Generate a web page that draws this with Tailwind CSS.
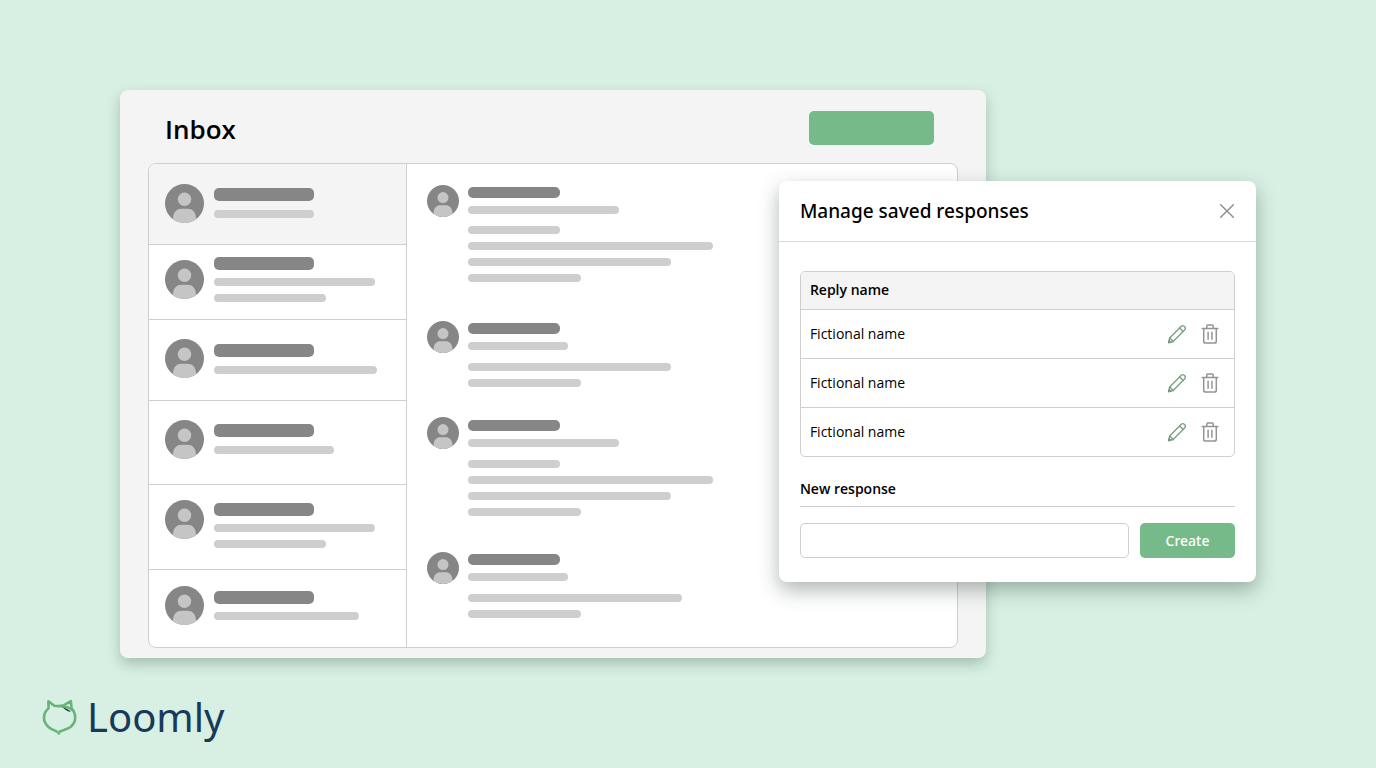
<!DOCTYPE html>
<html lang="en">
<head>
<meta charset="utf-8">
<meta name="viewport" content="width=device-width, initial-scale=1">
<title>Loomly – Manage saved responses</title>
<script src="https://cdn.jsdelivr.net/npm/@tailwindcss/browser@4"></script>
</head>
<body class="min-h-screen bg-[#d8f0e3] font-['Open_Sans','Noto_Sans',sans-serif] text-black">
<svg class="absolute size-0" aria-hidden="true">
  <symbol id="avatar" viewBox="0 0 39 39">
    <circle cx="19.5" cy="19.5" r="19.5" fill="#868686"/>
    <g fill="#c5c5c5">
      <circle cx="19.5" cy="15.3" r="6.7"/>
      <path d="M8 35.250V34.500C8 28 12 24.800 16.500 24.800H22.500C27 24.800 31 28 31 34.500V35.250A19.500 19.500 0 0 1 8 35.250Z"/>
    </g>
  </symbol>
  <symbol id="pencil" viewBox="0 0 20 20">
    <g fill="none" stroke="#7da187" stroke-width="1.400" stroke-linejoin="round" stroke-linecap="round">
      <path d="M1.500 18.700L2.700 14L14 2.500C15.100 1.400 16.400 1.400 17.500 2.500C18.600 3.600 18.600 4.900 17.500 6L6.200 17.500Z"/>
      <path d="M2.700 14L6.200 17.500M12.600 3.900L16.100 7.400"/>
    </g>
    <path d="M1.200 19L2 15.800L4.300 18.100Z" fill="#6f8f78"/>
  </symbol>
  <symbol id="trash" viewBox="0 0 18 20">
    <g fill="none" stroke="#949494" stroke-width="1.500" stroke-linejoin="round" stroke-linecap="round">
      <path d="M1.200 4.500H16.800M5.800 4.300V2C5.800 1.300 6.100 1 6.800 1H11.200C11.900 1 12.200 1.300 12.200 2V4.300"/>
      <path d="M2.700 4.700V17.200C2.700 18.500 3.300 19.100 4.600 19.100H13.400C14.700 19.100 15.300 18.500 15.300 17.200V4.700"/>
      <path d="M7.100 8.200V15.300M10.900 8.200V15.300"/>
    </g>
  </symbol>
</svg>

<main class="px-[120px] pt-[90px]">
  <div class="relative">
    <section aria-labelledby="inbox-title" class="mr-[270px] rounded-lg bg-[#f4f4f4] px-7 pb-2.5 shadow-[0_6px_14px_rgba(40,80,60,0.30)]">
      <header class="flex h-[73px] items-center justify-between pt-[3px] pr-6 pl-[17px]">
        <h1 id="inbox-title" class="pt-0.5 text-[26px] leading-8 font-semibold">Inbox</h1>
        <button type="button" aria-label="New message" class="h-[34px] w-[125px] rounded-[5px] bg-[#77ba89]"></button>
      </header>

      <div class="flex overflow-hidden rounded-lg border border-[#cfcfcf] bg-white">
        <ul class="w-[258px] shrink-0 border-r border-[#cfcfcf]">
          <li class="flex h-[81px] gap-2.5 border-b border-[#cfcfcf] bg-[#f4f4f4] px-4 pt-5">
            <svg class="size-[39px] shrink-0"><use href="#avatar"/></svg>
            <div class="flex flex-col gap-[9px] pt-1">
              <div class="h-[13px] w-[100px] rounded-[5px] bg-[#868686]"></div>
              <div class="h-2 w-[100px] rounded-full bg-[#cecece]"></div>
            </div>
          </li>
          <li class="flex h-[75px] gap-2.5 border-b border-[#cfcfcf] px-4 pt-3">
            <svg class="mt-[3px] size-[39px] shrink-0"><use href="#avatar"/></svg>
            <div class="flex flex-col gap-2">
              <div class="h-[13px] w-[100px] rounded-[5px] bg-[#868686]"></div>
              <div class="h-2 w-[161px] rounded-full bg-[#cecece]"></div>
              <div class="h-2 w-[112px] rounded-full bg-[#cecece]"></div>
            </div>
          </li>
          <li class="flex h-[81px] gap-2.5 border-b border-[#cfcfcf] px-4 pt-[19px]">
            <svg class="size-[39px] shrink-0"><use href="#avatar"/></svg>
            <div class="flex flex-col gap-[9px] pt-[5px]">
              <div class="h-[13px] w-[100px] rounded-[5px] bg-[#868686]"></div>
              <div class="h-2 w-[163px] rounded-full bg-[#cecece]"></div>
            </div>
          </li>
          <li class="flex h-[84px] gap-2.5 border-b border-[#cfcfcf] px-4 pt-[19px]">
            <svg class="size-[39px] shrink-0"><use href="#avatar"/></svg>
            <div class="flex flex-col gap-[9px] pt-1">
              <div class="h-[13px] w-[100px] rounded-[5px] bg-[#868686]"></div>
              <div class="h-2 w-[120px] rounded-full bg-[#cecece]"></div>
            </div>
          </li>
          <li class="flex h-[85px] gap-2.5 border-b border-[#cfcfcf] px-4 pt-[15px]">
            <svg class="size-[39px] shrink-0"><use href="#avatar"/></svg>
            <div class="flex flex-col gap-2 pt-[3px]">
              <div class="h-[13px] w-[100px] rounded-[5px] bg-[#868686]"></div>
              <div class="h-2 w-[161px] rounded-full bg-[#cecece]"></div>
              <div class="h-2 w-[112px] rounded-full bg-[#cecece]"></div>
            </div>
          </li>
          <li class="flex h-[77px] gap-2.5 px-4 pt-4">
            <svg class="size-[39px] shrink-0"><use href="#avatar"/></svg>
            <div class="flex flex-col gap-2 pt-[5px]">
              <div class="h-[13px] w-[100px] rounded-[5px] bg-[#868686]"></div>
              <div class="h-2 w-[145px] rounded-full bg-[#cecece]"></div>
            </div>
          </li>
        </ul>

        <div class="flex-1 px-5 pt-[21px]">
          <article class="flex h-[136px] gap-2">
            <svg class="size-8 shrink-0"><use href="#avatar"/></svg>
            <div class="flex flex-col gap-2 pt-[2px] pl-px">
              <div class="h-[11px] w-[92px] rounded-[5px] bg-[#868686]"></div>
              <div class="mb-1 h-2 w-[151px] rounded-full bg-[#cecece]"></div>
              <div class="h-2 w-[92px] rounded-full bg-[#cecece]"></div>
              <div class="h-2 w-[245px] rounded-full bg-[#cecece]"></div>
              <div class="h-2 w-[203px] rounded-full bg-[#cecece]"></div>
              <div class="h-2 w-[113px] rounded-full bg-[#cecece]"></div>
            </div>
          </article>
          <article class="flex h-24 gap-2">
            <svg class="size-8 shrink-0"><use href="#avatar"/></svg>
            <div class="flex flex-col gap-2 pt-[2px] pl-px">
              <div class="h-[11px] w-[92px] rounded-[5px] bg-[#868686]"></div>
              <div class="mb-[5px] h-2 w-[100px] rounded-full bg-[#cecece]"></div>
              <div class="h-2 w-[203px] rounded-full bg-[#cecece]"></div>
              <div class="h-2 w-[113px] rounded-full bg-[#cecece]"></div>
            </div>
          </article>
          <article class="flex h-[135px] gap-2">
            <svg class="size-8 shrink-0"><use href="#avatar"/></svg>
            <div class="flex flex-col gap-2 pt-[3px] pl-px">
              <div class="h-[11px] w-[92px] rounded-[5px] bg-[#868686]"></div>
              <div class="mb-[5px] h-2 w-[151px] rounded-full bg-[#cecece]"></div>
              <div class="h-2 w-[92px] rounded-full bg-[#cecece]"></div>
              <div class="h-2 w-[245px] rounded-full bg-[#cecece]"></div>
              <div class="h-2 w-[203px] rounded-full bg-[#cecece]"></div>
              <div class="h-2 w-[113px] rounded-full bg-[#cecece]"></div>
            </div>
          </article>
          <article class="flex gap-2">
            <svg class="size-8 shrink-0"><use href="#avatar"/></svg>
            <div class="flex flex-col gap-2 pt-[2px] pl-px">
              <div class="h-[11px] w-[92px] rounded-[5px] bg-[#868686]"></div>
              <div class="mb-[5px] h-2 w-[100px] rounded-full bg-[#cecece]"></div>
              <div class="h-2 w-[214px] rounded-full bg-[#cecece]"></div>
              <div class="h-2 w-[113px] rounded-full bg-[#cecece]"></div>
            </div>
          </article>
        </div>
      </div>
    </section>

    <section role="dialog" aria-labelledby="dialog-title" class="absolute top-[91px] right-0 w-[42%] rounded-lg bg-white pb-6 shadow-[0_8px_20px_rgba(30,50,40,0.35)]">
      <header class="flex h-[61px] items-center justify-between border-b border-[#d9d9d9] px-[21px]">
        <h2 id="dialog-title" class="font-['Noto_Sans',sans-serif] text-[19px] leading-7 font-medium">Manage saved responses</h2>
        <button type="button" aria-label="Close" class="p-px">
          <svg class="size-[14px]" viewBox="0 0 14 14" fill="none" stroke="#8b8b8b" stroke-width="1.400" stroke-linecap="round"><path d="M.7 .7L13.300 13.300M13.300 .7L.7 13.300"/></svg>
        </button>
      </header>
      <div class="px-[21px] pt-[29px]">
        <div class="overflow-hidden rounded-[5px] border border-[#cfcfcf]">
          <table class="w-full border-collapse text-left text-sm">
            <thead>
              <tr class="h-[37px] bg-[#f4f4f4]"><th scope="col" colspan="2" class="px-[9px] font-semibold">Reply name</th></tr>
            </thead>
            <tbody>
              <tr class="h-[49px] border-t border-[#cfcfcf]">
                <td class="px-[9px]">Fictional name</td>
                <td><div class="flex justify-end gap-[14px] pr-[15px]">
                  <button type="button" aria-label="Edit"><svg class="size-5"><use href="#pencil"/></svg></button>
                  <button type="button" aria-label="Delete"><svg class="h-5 w-[18px]"><use href="#trash"/></svg></button>
                </div></td>
              </tr>
              <tr class="h-[49px] border-t border-[#cfcfcf]">
                <td class="px-[9px]">Fictional name</td>
                <td><div class="flex justify-end gap-[14px] pr-[15px]">
                  <button type="button" aria-label="Edit"><svg class="size-5"><use href="#pencil"/></svg></button>
                  <button type="button" aria-label="Delete"><svg class="h-5 w-[18px]"><use href="#trash"/></svg></button>
                </div></td>
              </tr>
              <tr class="h-[49px] border-t border-[#cfcfcf]">
                <td class="px-[9px]">Fictional name</td>
                <td><div class="flex justify-end gap-[14px] pr-[15px]">
                  <button type="button" aria-label="Edit"><svg class="size-5"><use href="#pencil"/></svg></button>
                  <button type="button" aria-label="Delete"><svg class="h-5 w-[18px]"><use href="#trash"/></svg></button>
                </div></td>
              </tr>
            </tbody>
          </table>
        </div>
        <form>
          <label for="new-response" class="mt-[22px] block border-b border-[#cfcfcf] pb-[7px] text-sm font-semibold">New response</label>
          <div class="mt-4 flex gap-[11px]">
            <input id="new-response" type="text" class="h-[35px] min-w-0 flex-1 rounded-[5px] border border-[#cfcfcf] bg-white px-3 text-sm">
            <button type="button" class="h-[35px] w-[95px] rounded-[5px] bg-[#77ba89] font-['Noto_Sans',sans-serif] text-sm font-medium text-white">Create</button>
          </div>
        </form>
      </div>
    </section>
  </div>
</main>

<footer class="flex items-center gap-2.5 px-[42px] pt-8">
  <svg class="h-9 w-[35px]" viewBox="0 0 35 36" fill="none" stroke="#68b37a" stroke-width="2.600" stroke-linecap="round" stroke-linejoin="round" aria-hidden="true">
    <path d="M14.800 32.600C12 31 9 30.300 6.500 28C3.500 25.300 2 22 2 18.800C2 14.800 3.800 11.500 6.600 9.200L6.400 2.200L12.300 6.700C15.500 7.300 19.500 7.100 22 6.200L28.800 2.200L29.600 9.500C32 12 33.200 15.200 33.200 18.800C33.200 22.500 31.500 25.500 28.500 28C25.500 30.300 21.500 30.800 17.800 32.500L16.800 34.500"/>
    <path d="M20 7.500C24.500 7.500 28 8.800 30.300 11"/>
    <path d="M20.500 8.300C24 9 27 10.500 28.800 13C26 12.500 23 11 20.500 8.300Z" fill="#173f36"  stroke="none"/>
  </svg>
  <span class="font-['Noto_Sans',sans-serif] text-[40px] leading-[54px] text-[#173a5a]">Loomly</span>
</footer>
</body>
</html>
